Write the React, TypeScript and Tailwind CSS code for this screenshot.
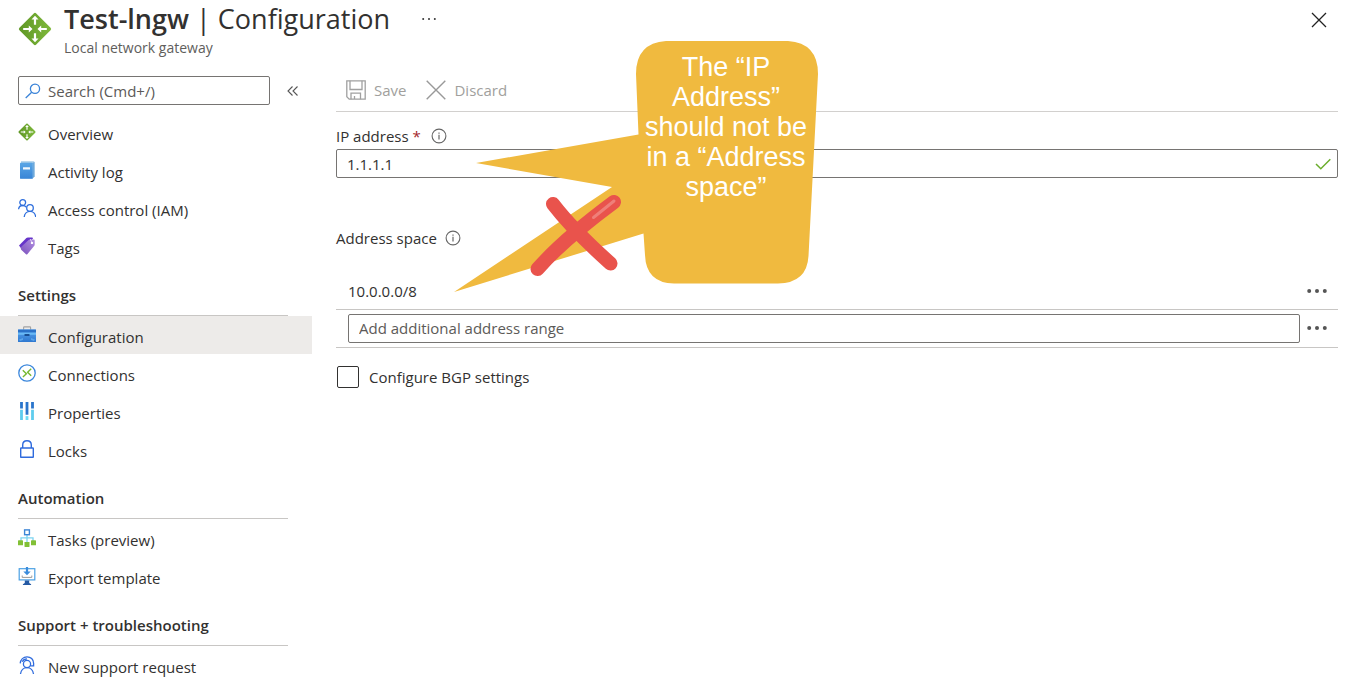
import type { ReactNode } from "react";

function GatewayIcon({ className }: { className: string }) {
  return (
    <svg viewBox="0 0 34 34" className={className} aria-hidden="true">
      <defs>
        <linearGradient id="gateway" x1="0" y1="1" x2="1" y2="0">
          <stop offset="0" stopColor="#5e9624" />
          <stop offset="1" stopColor="#7fb93c" />
        </linearGradient>
      </defs>
      <rect x="5.1" y="5.1" width="23.8" height="23.800" rx="1.800" transform="rotate(45 17 17)" fill="url(#gateway)" />
      <g fill="#fff">
        <path d="M17 3.700l3.500 3.700h-2.400v5.400h-2.200V7.400h-2.400z" />
        <path d="M17 30.300l3.500-3.700h-2.400v-5.400h-2.200v5.400h-2.400z" />
        <path d="M14.500 17l-3.700-3.500v2.400H5.200v2.200h5.600v2.400z" />
        <path d="M19.500 17l3.700-3.500v2.400h5.600v2.200h-5.600v2.400z" />
      </g>
    </svg>
  );
}

function Icon({ children }: { children: ReactNode }) {
  return (
    <svg viewBox="0 0 18 18" className="size-[18px] shrink-0" fill="none" aria-hidden="true">
      {children}
    </svg>
  );
}

const logIcon = (
  <Icon>
    <defs>
      <linearGradient id="log" x1="0" y1="0" x2="0" y2="1">
        <stop offset="0" stopColor="#5aa6e6" />
        <stop offset="1" stopColor="#3985d6" />
      </linearGradient>
    </defs>
    <path d="M3 .2h12.400q1.100 0 1.100 1.100v13.900l-1.800 2.300H3z" fill="#a5cbe8" />
    <path d="M14.700 2v15.500l1.800-2.300V1z" fill="#6fa9da" />
    <rect x="2" y="1.700" width="12.700" height="16.100" rx=".6" fill="url(#log)" />
    <rect x="5" y="6.200" width="7" height="2.400" rx=".3" fill="#f2f8fd" />
  </Icon>
);

const peopleIcon = (
  <Icon>
    <g stroke="#2f6fdd" strokeWidth="1.300">
      <circle cx="4.700" cy="3.600" r="2.900" />
      <circle cx="12" cy="9" r="3.300" />
      <path d="M.6 10.300C.8 8 2.400 6.500 4.700 6.500c1.500 0 2.700.6 3.500 1.700M6.200 18c.3-3.200 2.700-5.600 5.800-5.600s5.400 2.400 5.700 5.600" />
    </g>
  </Icon>
);

const tagIcon = (
  <Icon>
    <defs>
      <linearGradient id="tag" x1="1" y1="0" x2="0" y2="1">
        <stop offset="0" stopColor="#b190df" />
        <stop offset="1" stopColor="#7b50bd" />
      </linearGradient>
    </defs>
    <path d="M1 8.500L8.400 1q.6-.6 1.400-.6l4.200.1q.9.100 1 1L3.500 12z" fill="#6634c9" />
    <path d="M3.300 9.800l7.300-6.900q.4-.4 1-.4l4.300.1q.8 0 .8.800v4.400q0 .5-.4.900l-7 8.500q-.6.700-1.300.1l-4.800-4.500q-.9-1.100.1-3z" fill="url(#tag)" />
    <circle cx="14" cy="5.900" r="1.200" fill="#fff" />
    <path d="M13.600 4.800l-1.300-2.700" stroke="#e6d9fa" strokeWidth=".9" />
  </Icon>
);

const toolboxIcon = (
  <Icon>
    <defs>
      <linearGradient id="toolbox" x1="0" y1="0" x2="0" y2="1">
        <stop offset="0" stopColor="#58a4ec" />
        <stop offset="1" stopColor="#2f78d0" />
      </linearGradient>
    </defs>
    <path d="M5.600 3.800V1.600q0-.7.700-.7h5.600q.7 0 .7.700v2.200" stroke="#a2a2a2" strokeWidth="1.100" />
    <rect y="3.600" width="18" height="12.400" rx=".5" fill="url(#toolbox)" />
    <rect y="3.600" width="18" height="3" fill="#2b71c8" />
    <rect y="6.600" width="18" height="2.200" fill="#69b9f5" />
    <rect x="6.500" y="8" width="5" height="1.900" rx=".5" fill="#194e91" />
    <path d="M1 13.500l4-1.400v2l-3 1zM17 13.500l-4-1.400v2l3 1z" fill="#5ba4ea" />
  </Icon>
);

const connectionIcon = (
  <Icon>
    <circle cx="9" cy="9" r="8.200" stroke="#3b87dc" strokeWidth="1.300" />
    <path d="M4.800 6.300l3.600 3.400-3.500 3.400M13.200 4.800L9.600 8.300l3.600 3.500" stroke="#76b82e" strokeWidth="1.400" />
  </Icon>
);

const propertiesIcon = (
  <Icon>
    <path d="M3.500 0v6.500M9 0v12.800M14.500 0v6.500" stroke="#2a75cc" strokeWidth="2.800" />
    <path d="M3.500 7.800V18M14.500 7.800V18" stroke="#5fcdee" strokeWidth="2.800" />
    <path d="M9 14.100V18" stroke="#6fdcf4" strokeWidth="2.800" />
  </Icon>
);

const lockIcon = (
  <Icon>
    <g stroke="#2f6bdd" strokeWidth="1.400">
      <path d="M4.700 8V4.900C4.700 2.400 6.500.7 9 .7s4.300 1.700 4.300 4.200V8" />
      <rect x="2.700" y="8" width="12.600" height="9.300" rx=".4" />
    </g>
  </Icon>
);

const tasksIcon = (
  <Icon>
    <path d="M9 5.600v8M3 12V8.800h12V12" stroke="#7cd3f0" strokeWidth="1.300" />
    <rect x="6.600" y=".9" width="4.800" height="4.800" fill="#fff" stroke="#3d86d6" strokeWidth="1.400" />
    <g fill="#82c036">
      <rect y="11.300" width="5" height="5" rx=".4" />
      <rect x="6.500" y="13" width="5" height="5" rx=".4" />
      <rect x="13" y="11.300" width="5" height="5" rx=".4" />
    </g>
  </Icon>
);

const exportIcon = (
  <Icon>
    <rect x="1.200" y="1.700" width="15.600" height="11.200" stroke="#4ba0e4" strokeWidth="1.200" />
    <path d="M7.900 0h2.200v4.500h2.600L9 8.200 5.300 4.500h2.600z" fill="#3b8cdc" />
    <path d="M4.200 8.500v1.900h9.600V8.500" stroke="#9a9a9a" strokeWidth="1" />
    <path d="M6.800 13.500h4.400v2.600l1.900 1.200v.7H4.900v-.7l1.900-1.200z" fill="#2559a3" />
  </Icon>
);

const supportIcon = (
  <Icon>
    <g stroke="#2f6bdd" strokeWidth="1.300">
      <circle cx="9" cy="8" r="3.600" />
      <path d="M2.200 7.400C2.600 3.500 5.300.8 9 .8s6.600 2.600 6.600 6.500v2.500h-3.200" />
      <path d="M4.300 5.800C5 3.900 6.800 2.800 9 2.800" />
      <path d="M2.500 18c.4-3.700 3-6.300 6.500-6.300s6.100 2.600 6.500 6.300" />
    </g>
  </Icon>
);

type Item = { label: string; icon: ReactNode; active?: boolean };

const groups: { title?: string; items: Item[] }[] = [
  {
    items: [
      { label: "Overview", icon: <GatewayIcon className="size-[18px] shrink-0" /> },
      { label: "Activity log", icon: logIcon },
      { label: "Access control (IAM)", icon: peopleIcon },
      { label: "Tags", icon: tagIcon },
    ],
  },
  {
    title: "Settings",
    items: [
      { label: "Configuration", icon: toolboxIcon, active: true },
      { label: "Connections", icon: connectionIcon },
      { label: "Properties", icon: propertiesIcon },
      { label: "Locks", icon: lockIcon },
    ],
  },
  {
    title: "Automation",
    items: [
      { label: "Tasks (preview)", icon: tasksIcon },
      { label: "Export template", icon: exportIcon },
    ],
  },
  {
    title: "Support + troubleshooting",
    items: [{ label: "New support request", icon: supportIcon }],
  },
];

function InfoButton({ label }: { label: string }) {
  return (
    <button type="button" aria-label={label}>
      <svg viewBox="0 0 16 16" className="size-4" fill="none" stroke="#666" aria-hidden="true">
        <circle cx="8" cy="8" r="6.900" strokeWidth="1.100" />
        <path d="M8 6.800v4.600" strokeWidth="1.200" />
        <path d="M8 4.400v1.300" strokeWidth="1.200" />
      </svg>
    </button>
  );
}

function MoreButton({ label }: { label: string }) {
  return (
    <button type="button" aria-label={label} className="flex h-6 w-[38px] items-center justify-end pr-[11px]">
      <svg viewBox="0 0 20 4" className="h-1 w-5" fill="#555" aria-hidden="true">
        <circle cx="2.200" cy="2" r="2" />
        <circle cx="10" cy="2" r="2" />
        <circle cx="17.800" cy="2" r="2" />
      </svg>
    </button>
  );
}

function Sidebar() {
  return (
    <aside className="w-[312px] shrink-0">
      <div className="flex items-center gap-4 pl-[18px] pt-3">
        <div className="flex h-[29px] w-[252px] items-center gap-[7px] rounded-xs border border-[#767472] pl-1.5">
          <svg viewBox="0 0 16 16" className="size-4 shrink-0" fill="none" stroke="#3a83d8" strokeWidth="1.300" aria-hidden="true">
            <circle cx="10" cy="5.800" r="4.600" />
            <path d="M6.700 9.200L.7 15" />
          </svg>
          <input
            type="search"
            aria-label="Search menu"
            placeholder="Search (Cmd+/)"
            className="min-w-0 flex-1 bg-transparent leading-5 outline-none placeholder:text-[#5c5a58]"
          />
        </div>
        <button type="button" aria-label="Collapse menu">
          <svg viewBox="0 0 14 14" className="size-3.5" fill="none" stroke="#555" strokeWidth="1.100" aria-hidden="true">
            <path d="M6.500 2.500L2 7l4.500 4.500M11.500 2.500L7 7l4.500 4.500" />
          </svg>
        </button>
      </div>
      <nav className="pt-2" aria-label="Resource menu">
        {groups.map((group, i) => (
          <section key={i}>
            {group.title && (
              <h2 className="ml-[18px] mr-6 flex h-[51px] items-center border-b border-[#c8c6c4] pt-2.5 font-semibold">
                {group.title}
              </h2>
            )}
            <ul>
              {group.items.map((item) => (
                <li key={item.label}>
                  <a
                    href="#"
                    aria-current={item.active ? "page" : undefined}
                    className={`flex h-[38px] items-center gap-3 pl-[18px] ${item.active ? "bg-[#edebe9]" : ""}`}
                  >
                    {item.icon}
                    <span className="pt-[3px]">{item.label}</span>
                  </a>
                </li>
              ))}
            </ul>
          </section>
        ))}
      </nav>
    </aside>
  );
}

function Callout() {
  return (
    <div className="pointer-events-none absolute left-[118px] top-[-23px] h-[252px] w-[364px]">
      <svg viewBox="454 41 364 252" className="absolute inset-0 size-full" aria-hidden="true">
        <path
          d="M666 41H788Q818 43 818 74L808.500 256Q807 283 778 283.500H674Q646 283 645 255L643.500 233.500 454 292 612 187 476 163 638.500 134.500 636 74Q636 43 666 41Z"
          fill="#f0ba3f"
        />
        <g stroke="#e9534c" strokeWidth="14" strokeLinecap="round" fill="none">
          <path d="M553 204Q573 230 610.500 263.500" />
          <path d="M614 202Q564 239 537.500 269" />
        </g>
        <path d="M614 201L593.500 217.500" stroke="#ef7f79" strokeWidth="3" strokeLinecap="round" />
      </svg>
      <p className="absolute left-[182px] top-[11px] w-[180px] text-center font-['Liberation_Sans',Arial,sans-serif] text-[27px] leading-[30px] text-white">
        The “IP
        <br />
        Address”
        <br />
        should not be
        <br />
        in a “Address
        <br />
        space”
      </p>
    </div>
  );
}

export default function App() {
  return (
    <div className="bg-white font-['Open_Sans','Segoe_UI',sans-serif] text-[15px] leading-5 text-[#323130]">
      <header className="flex h-16 items-start pl-[18px] pr-[19px]">
        <GatewayIcon className="mt-3 size-[34px] shrink-0" />
        <div className="ml-3">
          <div className="flex h-[38px] items-center">
            <h1 className="text-[27px] leading-9">
              <span className="font-semibold">Test-lngw</span> | Configuration
            </h1>
            <button type="button" aria-label="More actions" className="ml-8">
              <svg viewBox="0 0 14 4" className="h-1 w-3.5" fill="#333" aria-hidden="true">
                <circle cx="1.200" cy="2" r="1" />
                <circle cx="7" cy="2" r="1" />
                <circle cx="12.800" cy="2" r="1" />
              </svg>
            </button>
          </div>
          <p className="text-[14px] text-[#605e5c]">Local network gateway</p>
        </div>
        <button type="button" aria-label="Close" className="ml-auto mt-3">
          <svg viewBox="0 0 16 16" className="size-4" stroke="#222" strokeWidth="1.300" aria-hidden="true">
            <path d="M1 1l14 14M15 1L1 15" />
          </svg>
        </button>
      </header>

      <div className="flex">
        <Sidebar />
        <main className="relative ml-6 mr-2 min-w-0 flex-1">
          <div className="flex h-12 items-center gap-5 border-b border-[#d2d0ce] pl-2.5 pt-1 text-[#a19f9d]">
            <button type="button" disabled className="flex items-center gap-2">
              <svg viewBox="0 0 20 20" className="size-5" fill="none" stroke="#a0a0a0" strokeWidth="1.300" aria-hidden="true">
                <path d="M.8.800h18.400v18.400H3.200L.8 16.800z" />
                <path d="M4 .8v8.700h12V.8M5 19.200v-6h9.500v6M8.500 19v-3" />
              </svg>
              Save
            </button>
            <button type="button" disabled className="flex items-center gap-2">
              <svg viewBox="0 0 20 20" className="size-5" stroke="#999" strokeWidth="1.400" aria-hidden="true">
                <path d="M.7.700l18.600 18.600M19.300.7L.7 19.300" />
              </svg>
              Discard
            </button>
          </div>

          <div className="flex items-center pt-3.5">
            <label htmlFor="ip">
              IP address <span className="text-[#a4262c]">*</span>
            </label>
            <span className="ml-2.5 flex">
              <InfoButton label="About IP address" />
            </span>
          </div>
          <div className="mt-[3px] flex h-[29px] items-center rounded-xs border border-[#767472] pl-2.5 pr-1.5">
            <input id="ip" defaultValue="1.1.1.1" className="min-w-0 flex-1 bg-transparent outline-none" />
            <svg viewBox="0 0 16 12" className="h-3 w-4" fill="none" stroke="#6bad2c" strokeWidth="1.500" aria-hidden="true">
              <path d="M1 6l4.800 4.800L15.300 1.300" />
            </svg>
          </div>

          <div className="flex items-center gap-2 pt-[50px]">
            <h2>Address space</h2>
            <InfoButton label="About address space" />
          </div>
          <table className="mt-[25px] w-full border-collapse" aria-label="Address space">
            <tbody>
              <tr className="h-9 border-b border-[#c8c6c4]">
                <td className="pl-3">10.0.0.0/8</td>
                <td className="w-[38px] p-0">
                  <MoreButton label="Options for 10.0.0.0/8" />
                </td>
              </tr>
              <tr className="h-[38px] border-b border-[#c8c6c4]">
                <td className="p-0 pl-3">
                  <input
                    aria-label="Add additional address range"
                    placeholder="Add additional address range"
                    className="block h-[29px] w-full rounded-xs border border-[#767472] px-2.5 outline-none placeholder:text-[#5c5a58]"
                  />
                </td>
                <td className="w-[38px] p-0">
                  <MoreButton label="Options for new range" />
                </td>
              </tr>
            </tbody>
          </table>
          <label className="mt-[18px] flex items-center gap-2.5 pl-px">
            <input type="checkbox" className="size-[22px] appearance-none rounded-xs border border-[#323130] bg-white checked:bg-[#0078d4]" />
            Configure BGP settings
          </label>
          <Callout />
        </main>
      </div>
    </div>
  );
}
